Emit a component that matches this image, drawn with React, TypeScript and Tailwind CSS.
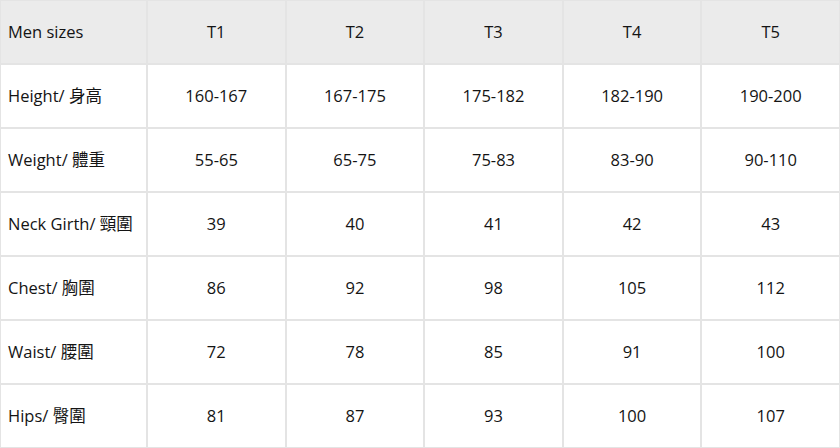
import { Fragment } from "react";

const SIZES = ["T1", "T2", "T3", "T4", "T5"];

const ROWS: { label: string; values: string[] }[] = [
  { label: "Height/ 身高", values: ["160-167", "167-175", "175-182", "182-190", "190-200"] },
  { label: "Weight/ 體重", values: ["55-65", "65-75", "75-83", "83-90", "90-110"] },
  { label: "Neck Girth/ 頸圍", values: ["39", "40", "41", "42", "43"] },
  { label: "Chest/ 胸圍", values: ["86", "92", "98", "105", "112"] },
  { label: "Waist/ 腰圍", values: ["72", "78", "85", "91", "100"] },
  { label: "Hips/ 臀圍", values: ["81", "87", "93", "100", "107"] },
];

export default function App() {
  return (
    <div
      className="w-[840px] h-[448px] bg-white text-[16.5px] text-[#141414]"
      style={{ fontFamily: '"Open Sans", "Noto Sans CJK TC", sans-serif' }}
    >
      <div className="grid grid-cols-[145px_repeat(5,1fr)] grid-rows-[repeat(7,62px)] gap-[2px] bg-[#e4e4e4] p-[1px] h-full">
        <div className="bg-[#ebebeb] flex items-center pl-[7px]">Men sizes</div>
        {SIZES.map((s) => (
          <div key={s} className="bg-[#ebebeb] flex items-center justify-center">
            {s}
          </div>
        ))}
        {ROWS.map((row) => (
          <Fragment key={row.label}>
            <div className="bg-white flex items-center pl-[7px] whitespace-nowrap">{row.label}</div>
            {row.values.map((v, i) => (
              <div key={i} className="bg-white flex items-center justify-center">
                {v}
              </div>
            ))}
          </Fragment>
        ))}
      </div>
    </div>
  );
}
